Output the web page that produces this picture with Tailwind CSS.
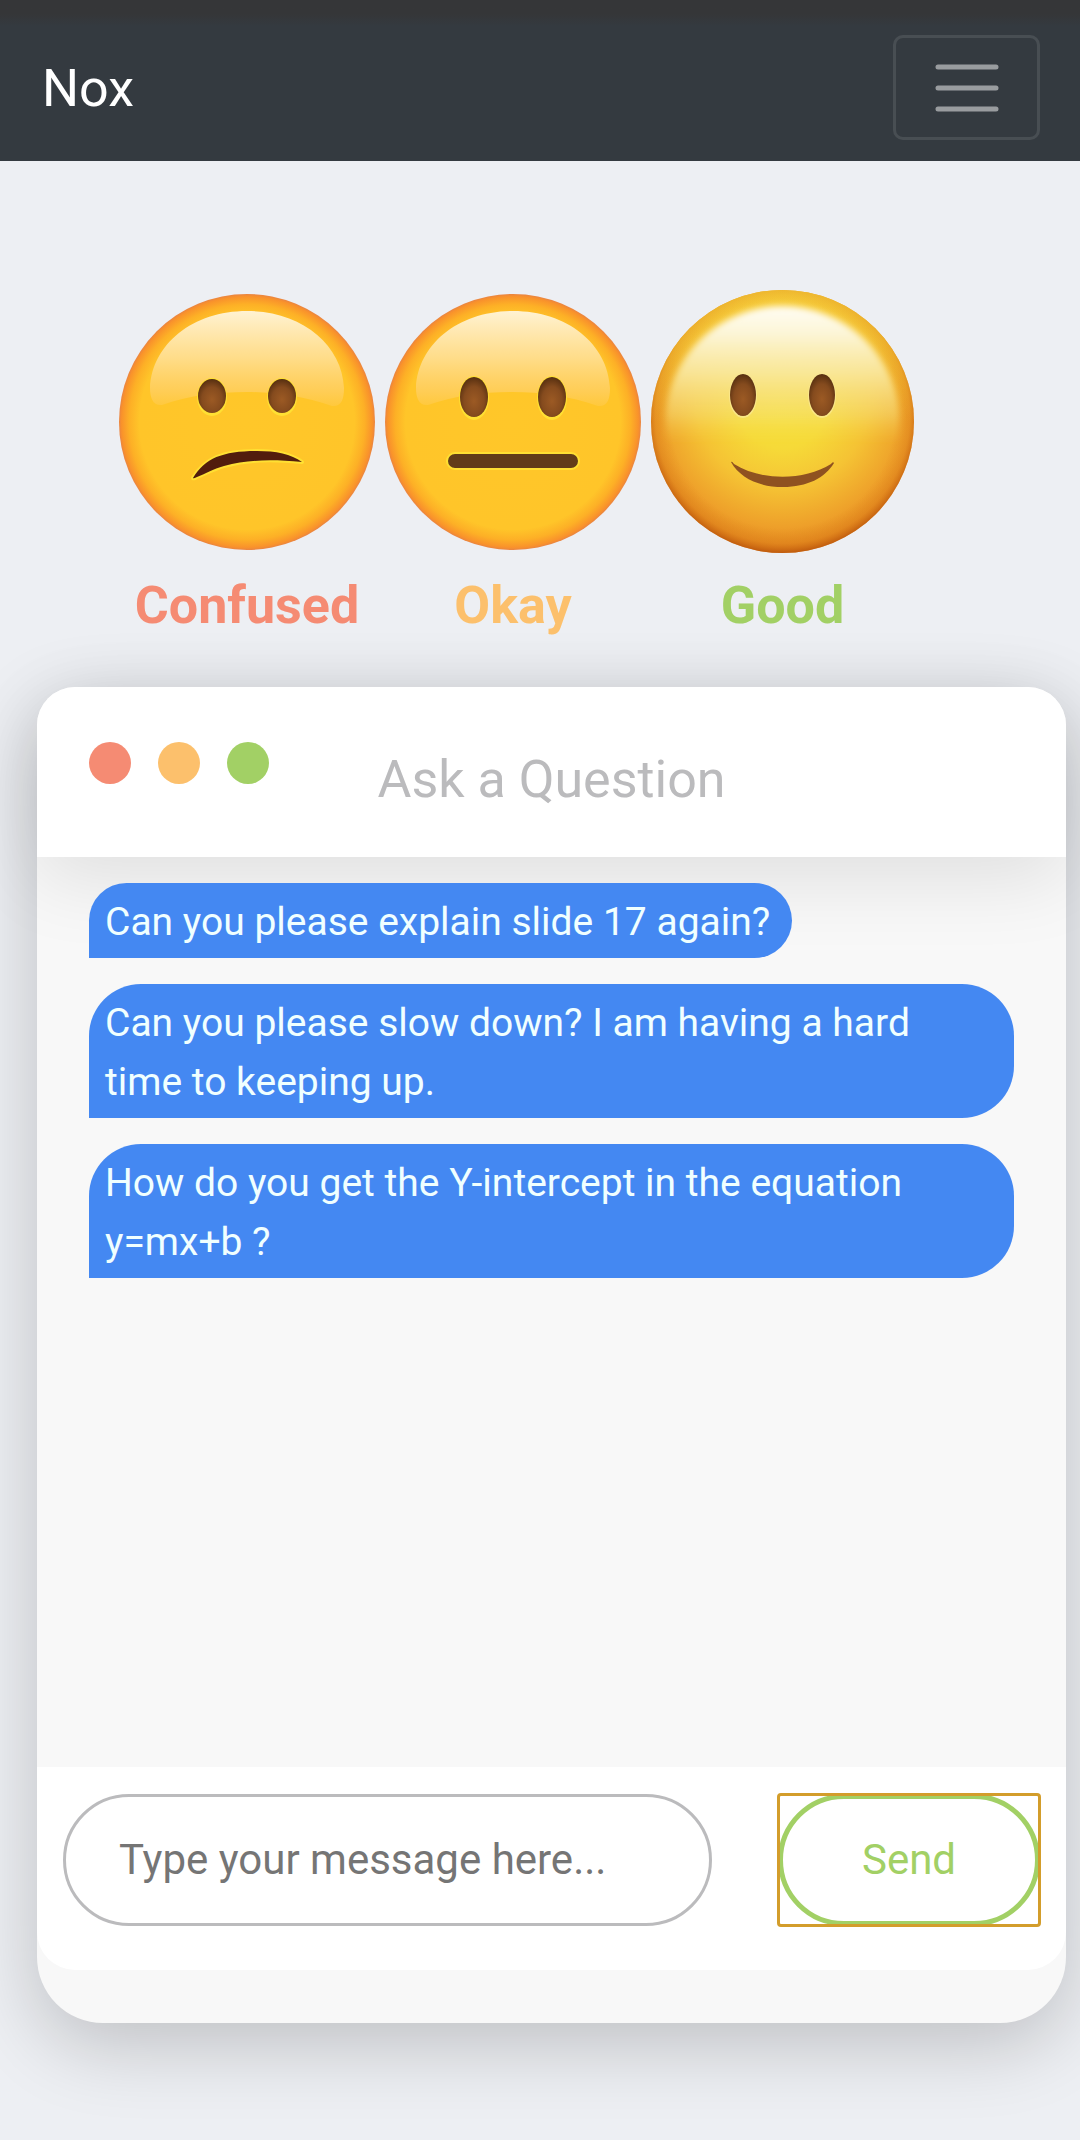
<!DOCTYPE html>
<html lang="en">
<head>
<meta charset="utf-8">
<meta name="viewport" content="width=device-width, initial-scale=1">
<title>Nox</title>
<script src="https://cdn.jsdelivr.net/npm/@tailwindcss/browser@4"></script>
</head>
<body class="min-h-screen overflow-x-hidden bg-[#edeff3] pb-[118px] font-['Roboto',sans-serif]">

<!-- Top bar -->
<header class="flex h-[161px] items-center justify-between bg-linear-to-b from-[#353638] from-[14px] to-[#343a40] to-[26px] pt-[14px] pr-10 pl-[42px]">
  <a href="#" class="pt-[2px] text-[52px] leading-[78px] text-white">Nox</a>
  <button type="button" aria-label="Toggle navigation" class="flex h-[105px] w-[147px] items-center justify-center rounded-[10px] border-[3px] border-white/10">
    <svg class="h-[50px] w-16" viewBox="0 0 64 50" fill="none" stroke="#999c9f" stroke-width="5" stroke-linecap="round"><path d="M3 4h58M3 25h58M3 46h58"/></svg>
  </button>
</header>

<main>
  <!-- Mood picker -->
  <section aria-label="How are you following?" class="flex gap-[10px] pt-[129px] pl-[119px] text-[52px] leading-[60px] font-bold">
    <button type="button" class="flex flex-col items-center gap-[23px] text-[#f58b73]">
      <span class="flex h-[263px] items-center">
        <svg class="size-64" viewBox="0 0 256 256" aria-hidden="true">
          <defs>
            <radialGradient id="skin"><stop offset="0" stop-color="#ffc729"/><stop offset=".84" stop-color="#ffc529"/><stop offset=".92" stop-color="#fdb026"/><stop offset=".98" stop-color="#f9922b"/><stop offset="1" stop-color="#e98441"/></radialGradient>
            <linearGradient id="shine" x1="0" y1="0" x2="0" y2="1"><stop offset="0" stop-color="#fff2d2"/><stop offset=".5" stop-color="#ffdf93" stop-opacity=".9"/><stop offset=".85" stop-color="#ffd068" stop-opacity=".7"/><stop offset="1" stop-color="#ffd068" stop-opacity=".3"/></linearGradient>
            <radialGradient id="eye" cx=".5" cy=".6" r=".6"><stop offset="0" stop-color="#9c5a24"/><stop offset=".6" stop-color="#854b1e"/><stop offset="1" stop-color="#562f10"/></radialGradient>
          </defs>
          <circle cx="128" cy="128" r="128" fill="url(#skin)"/>
          <path d="M43 111C34 112 31 104 31 94C33 50 74 17 128 17C182 17 223 50 225 94C225 106 222 113 213 112C184 102 156 98 128 98C98 98 72 101 43 111Z" fill="url(#shine)"/>
          <g fill="#ffe033"><ellipse cx="93" cy="103" rx="15" ry="19"/><ellipse cx="163" cy="103" rx="15" ry="19"/></g>
          <g fill="url(#eye)"><ellipse cx="93" cy="102" rx="14" ry="17"/><ellipse cx="163" cy="102" rx="14" ry="17"/></g>
          <path d="M74 184C86 164 104 157 138 157C157 157 172 160 183 168C150 165 128 166 105 172C94 175 86 180 78 183Q74 185 74 184Z" fill="#521d0d" stroke="#ffe033" stroke-width="4" stroke-linejoin="round"/>
          <path d="M74 184C86 164 104 157 138 157C157 157 172 160 183 168C150 165 128 166 105 172C94 175 86 180 78 183Q74 185 74 184Z" fill="#521d0d"/>
        </svg>
      </span>
      Confused
    </button>
    <button type="button" class="flex flex-col items-center gap-[23px] text-[#fcc06c]">
      <span class="flex h-[263px] items-center">
        <svg class="size-64" viewBox="0 0 256 256" aria-hidden="true">
          <circle cx="128" cy="128" r="128" fill="url(#skin)"/>
          <path d="M43 111C34 112 31 104 31 94C33 50 74 17 128 17C182 17 223 50 225 94C225 106 222 113 213 112C184 102 156 98 128 98C98 98 72 101 43 111Z" fill="url(#shine)"/>
          <g fill="#ffe033"><ellipse cx="89" cy="104" rx="15" ry="22"/><ellipse cx="167" cy="104" rx="15" ry="22"/></g>
          <g fill="url(#eye)"><ellipse cx="89" cy="103" rx="14" ry="20"/><ellipse cx="167" cy="103" rx="14" ry="20"/></g>
          <rect x="62" y="159" width="132" height="16" rx="8" fill="#623c19" stroke="#ffe033" stroke-width="2"/>
        </svg>
      </span>
      Okay
    </button>
    <button type="button" class="flex flex-col items-center gap-[23px] text-[#a2d065]">
      <span class="flex h-[263px] items-center">
        <svg class="size-[263px]" viewBox="0 0 263 263" aria-hidden="true">
          <defs>
            <radialGradient id="goodBase" cx=".5" cy=".42" r=".6"><stop offset="0" stop-color="#f6e03a"/><stop offset=".3" stop-color="#f6da38"/><stop offset=".55" stop-color="#f5c334"/><stop offset=".8" stop-color="#eea02a"/><stop offset="1" stop-color="#e0801c"/></radialGradient>
            <linearGradient id="goodTop" x1="0" y1="0" x2="0" y2="1"><stop offset="0" stop-color="#f7cf3a"/><stop offset=".2" stop-color="#f6c837" stop-opacity=".9"/><stop offset=".5" stop-color="#f5c034" stop-opacity="0"/></linearGradient>
            <radialGradient id="goodRim" cx=".5" cy=".48" r=".52"><stop offset=".82" stop-color="#d4700f" stop-opacity="0"/><stop offset=".93" stop-color="#cf690e" stop-opacity=".25"/><stop offset="1" stop-color="#b34c08" stop-opacity=".75"/></radialGradient>
            <linearGradient id="goodShine" gradientUnits="userSpaceOnUse" x1="0" y1="16" x2="0" y2="152"><stop offset="0" stop-color="#fffdf4"/><stop offset=".2" stop-color="#fdf8e0" stop-opacity=".95"/><stop offset=".5" stop-color="#faefb4" stop-opacity=".75"/><stop offset=".8" stop-color="#f8e68c" stop-opacity=".4"/><stop offset="1" stop-color="#f7dc50" stop-opacity="0"/></linearGradient>
            <filter id="soft" x="-10%" y="-10%" width="120%" height="120%"><feGaussianBlur stdDeviation="3"/></filter>
          </defs>
          <circle cx="131.500" cy="131.500" r="131.500" fill="url(#goodBase)"/>
          <circle cx="131.500" cy="131.500" r="131.500" fill="url(#goodTop)"/>
          <circle cx="131.500" cy="131.500" r="131.500" fill="url(#goodRim)"/>
          <circle cx="131.500" cy="133" r="117" fill="url(#goodShine)" filter="url(#soft)"/>
          <g fill="#fbe996" fill-opacity=".7"><ellipse cx="92" cy="106" rx="14" ry="22"/><ellipse cx="171" cy="106" rx="14" ry="22"/></g>
          <g fill="url(#eye)"><ellipse cx="92" cy="105" rx="13" ry="21"/><ellipse cx="171" cy="105" rx="13" ry="21"/></g>
          <path d="M80 172Q81 171 83 174C110 191 153 191 180 174Q182 171 183 173C174 188 156 197 132 197C108 197 89 188 80 172Z" fill="#8f5220"/>
        </svg>
      </span>
      Good
    </button>
  </section>

  <!-- Question window -->
  <section class="mt-[51px] mr-[14px] ml-[37px] rounded-t-[38px] rounded-b-[66px] bg-[#f8f8f8] pb-[53px] shadow-[0_21px_78px_rgba(0,0,0,0.2)]">
    <div class="relative flex h-[170px] items-center justify-center rounded-t-[38px] bg-white pt-4 shadow-[0_21px_78px_rgba(0,0,0,0.1)]">
      <div class="absolute top-[55px] left-[52px] flex gap-[27px]">
        <span class="size-[42px] rounded-full bg-[#f58b73]"></span>
        <span class="size-[42px] rounded-full bg-[#fcc06c]"></span>
        <span class="size-[42px] rounded-full bg-[#a2d065]"></span>
      </div>
      <h1 class="text-[52px] leading-[78px] text-[#bbbbbd]">Ask a Question</h1>
    </div>

    <ul class="relative flex min-h-[910px] flex-col items-start gap-[26px] px-[52px] pt-[26px] text-[39px] leading-[59px] text-[#f0ffff]">
      <li class="rounded-[38px] rounded-bl-none bg-[#4488f2] pt-[10px] pr-[22px] pb-[6px] pl-4">Can you please explain slide 17 again?</li>
      <li class="rounded-[52px] rounded-bl-none bg-[#4488f2] pt-[10px] pr-[22px] pb-[6px] pl-4">Can you please slow down? I am having a hard time to keeping up.</li>
      <li class="rounded-[52px] rounded-bl-none bg-[#4488f2] pt-[10px] pr-[22px] pb-[6px] pl-4">How do you get the Y-intercept in the equation y=mx+b ?</li>
    </ul>

    <form class="relative flex items-center gap-[66px] rounded-b-[38px] bg-white pt-[27px] pr-[26px] pb-11 pl-[26px] text-[42px]">
      <input type="text" aria-label="Message" placeholder="Type your message here..." class="h-[132px] min-w-0 flex-1 rounded-full border-[3px] border-[#bbbbbd] bg-white px-[53px] pb-[2px] text-[#444753] placeholder:text-[#757575]">
      <div class="rounded-[3px] outline-3 -outline-offset-2 outline-[#d39d2b]">
        <button type="button" class="block h-[132px] w-[262px] rounded-full border-[5px] border-[#a2d065] bg-white pb-[2px] text-[#a2d065]">Send</button>
      </div>
    </form>
  </section>
</main>
</body>
</html>
